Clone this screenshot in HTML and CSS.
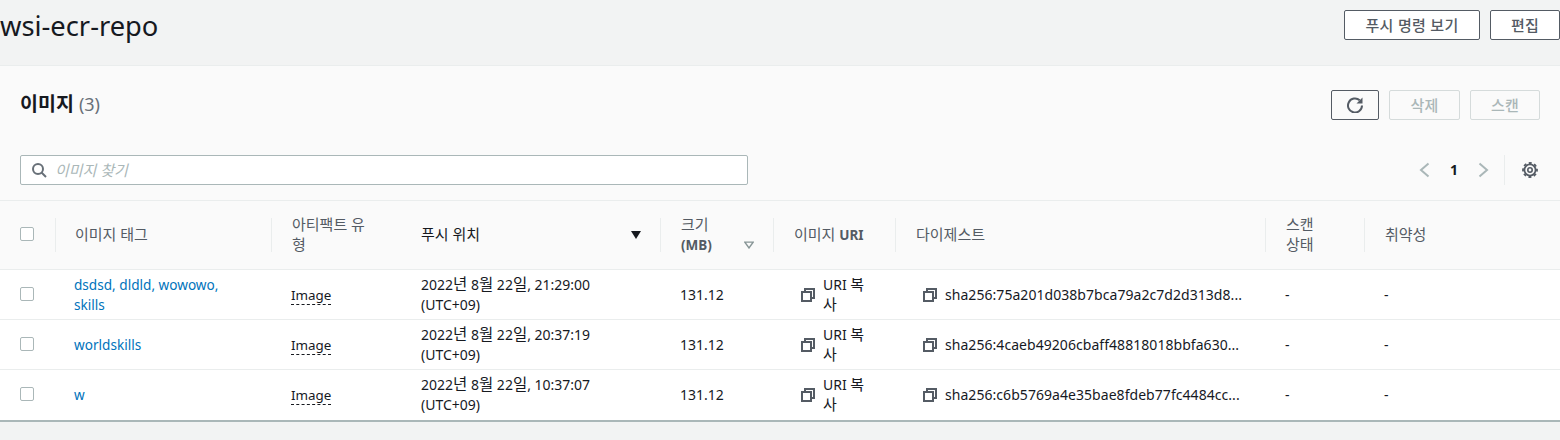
FILE: index.html
```html
<!DOCTYPE html>
<html lang="ko">
<head>
<meta charset="utf-8">
<title>wsi-ecr-repo</title>
<link rel="stylesheet" href="styles.css">
</head>
<body>
<header class="page-head">
  <h1 class="page-title">wsi-ecr-repo</h1>
  <div class="actions head-actions">
    <button class="btn btn-push">푸시 명령 보기</button>
    <button class="btn btn-edit">편집</button>
  </div>
</header>
<main class="panel">
  <div class="panel-top">
    <h2 class="panel-title">이미지 <span class="count">(3)</span></h2>
    <div class="actions panel-actions">
      <button class="btn btn-refresh" aria-label="새로 고침">
        <svg class="icon" viewBox="0 0 16 16" width="16" height="16"><path d="M15 8.500a7 7 0 1 1-2.300-5.200" fill="none" stroke="currentColor" stroke-width="2"/><path d="M15.500 .5v6h-6z" fill="currentColor"/></svg>
      </button>
      <button class="btn btn-off btn-delete" disabled>삭제</button>
      <button class="btn btn-off btn-scan" disabled>스캔</button>
    </div>
  </div>
  <div class="panel-tools">
    <div class="search">
      <svg class="icon search-icon" viewBox="0 0 16 16" width="16" height="16"><circle cx="7" cy="7" r="5" fill="none" stroke="currentColor" stroke-width="2"/><path d="M10.500 10.500l4.500 4.500" fill="none" stroke="currentColor" stroke-width="2"/></svg>
      <span class="placeholder">이미지 찾기</span>
    </div>
    <div class="pager">
      <svg class="chev" viewBox="0 0 16 16" width="16" height="16"><path d="M10.500 1.500L3 8l7.500 6.500" fill="none" stroke="currentColor" stroke-width="2"/></svg>
      <span class="page-num">1</span>
      <svg class="chev" viewBox="0 0 16 16" width="16" height="16"><path d="M5.500 1.500L13 8l-7.500 6.500" fill="none" stroke="currentColor" stroke-width="2"/></svg>
      <span class="pager-sep"></span>
      <svg class="gear" viewBox="0 0 16 16" width="16" height="16"><circle cx="8" cy="8" r="2.200" fill="none" stroke="currentColor" stroke-width="1.600"/><circle cx="8" cy="8" r="5.600" fill="none" stroke="currentColor" stroke-width="1.800"/><circle cx="8" cy="8" r="7" fill="none" stroke="currentColor" stroke-width="1.800" stroke-dasharray="3 2.500" stroke-dashoffset="1.500"/></svg>
    </div>
  </div>
  <table class="images">
    <colgroup>
      <col class="c-check"><col class="c-tag"><col class="c-type"><col class="c-push"><col class="c-size"><col class="c-uri"><col class="c-digest"><col class="c-scan"><col class="c-vuln">
    </colgroup>
    <thead>
      <tr>
        <th class="cell-check"><span class="check"></span></th>
        <th><div class="th-in first"><span>이미지 태그</span></div></th>
        <th><div class="th-in"><span>아티팩트 유<br>형</span></div></th>
        <th><div class="th-in sorted"><span>푸시 위치</span><svg class="sort" viewBox="0 0 10 8" width="10" height="8"><path d="M0 0h10L5 8z" fill="#16191f"/></svg></div></th>
        <th><div class="th-in sortable"><span class="size-label">크기<br><b>(MB)</b></span><svg class="sort sort-off" viewBox="0 0 12 9" width="10" height="8"><path d="M1 1h10L6 8z" fill="none" stroke="currentColor" stroke-width="1.700"/></svg></div></th>
        <th><div class="th-in"><span>이미지 <b>URI</b></span></div></th>
        <th><div class="th-in"><span>다이제스트</span></div></th>
        <th><div class="th-in"><span>스캔<br>상태</span></div></th>
        <th><div class="th-in"><span>취약성</span></div></th>
      </tr>
    </thead>
    <tbody>
      <tr>
        <td class="cell-check"><span class="check"></span></td>
        <td class="cell-tag"><a href="#">dsdsd</a>, <a href="#">dldld</a>, <a href="#">wowowo</a>,<br><a href="#">skills</a></td>
        <td class="cell-type"><span class="dashed">Image</span></td>
        <td class="cell-date">2022<span class="ko">년</span> 8<span class="ko">월</span> 22<span class="ko">일</span>, 21:29:00<br>(UTC+09)</td>
        <td class="cell-size">131.12</td>
        <td class="cell-uri"><div class="copy"><svg class="icon" viewBox="0 0 14 14" width="14" height="14"><path d="M4 4V1h9v9h-3M1 4h9v9H1z" fill="none" stroke="currentColor" stroke-width="2"/></svg><span class="copy-text">URI <span class="ko-sm">복</span><br><span class="ko-sm">사</span></span></div></td>
        <td class="cell-digest"><div class="copy"><svg class="icon" viewBox="0 0 14 14" width="14" height="14"><path d="M4 4V1h9v9h-3M1 4h9v9H1z" fill="none" stroke="currentColor" stroke-width="2"/></svg><span class="hash">sha256:75a201d038b7bca79a2c7d2d313d8...</span></div></td>
        <td class="cell-dash">-</td>
        <td class="cell-dash">-</td>
      </tr>
      <tr>
        <td class="cell-check"><span class="check"></span></td>
        <td class="cell-tag"><a href="#">worldskills</a></td>
        <td class="cell-type"><span class="dashed">Image</span></td>
        <td class="cell-date">2022<span class="ko">년</span> 8<span class="ko">월</span> 22<span class="ko">일</span>, 20:37:19<br>(UTC+09)</td>
        <td class="cell-size">131.12</td>
        <td class="cell-uri"><div class="copy"><svg class="icon" viewBox="0 0 14 14" width="14" height="14"><path d="M4 4V1h9v9h-3M1 4h9v9H1z" fill="none" stroke="currentColor" stroke-width="2"/></svg><span class="copy-text">URI <span class="ko-sm">복</span><br><span class="ko-sm">사</span></span></div></td>
        <td class="cell-digest"><div class="copy"><svg class="icon" viewBox="0 0 14 14" width="14" height="14"><path d="M4 4V1h9v9h-3M1 4h9v9H1z" fill="none" stroke="currentColor" stroke-width="2"/></svg><span class="hash">sha256:4caeb49206cbaff48818018bbfa630...</span></div></td>
        <td class="cell-dash">-</td>
        <td class="cell-dash">-</td>
      </tr>
      <tr>
        <td class="cell-check"><span class="check"></span></td>
        <td class="cell-tag"><a href="#">w</a></td>
        <td class="cell-type"><span class="dashed">Image</span></td>
        <td class="cell-date">2022<span class="ko">년</span> 8<span class="ko">월</span> 22<span class="ko">일</span>, 10:37:07<br>(UTC+09)</td>
        <td class="cell-size">131.12</td>
        <td class="cell-uri"><div class="copy"><svg class="icon" viewBox="0 0 14 14" width="14" height="14"><path d="M4 4V1h9v9h-3M1 4h9v9H1z" fill="none" stroke="currentColor" stroke-width="2"/></svg><span class="copy-text">URI <span class="ko-sm">복</span><br><span class="ko-sm">사</span></span></div></td>
        <td class="cell-digest"><div class="copy"><svg class="icon" viewBox="0 0 14 14" width="14" height="14"><path d="M4 4V1h9v9h-3M1 4h9v9H1z" fill="none" stroke="currentColor" stroke-width="2"/></svg><span class="hash">sha256:c6b5769a4e35bae8fdeb77fc4484cc...</span></div></td>
        <td class="cell-dash">-</td>
        <td class="cell-dash">-</td>
      </tr>
    </tbody>
  </table>
</main>
</body>
</html>
```
FILE: styles.css
```css
* { box-sizing: border-box; }
html, body { margin: 0; padding: 0; height: 100%; overflow: hidden; }
body {
  background: #f2f3f3;
  color: #16191f;
  font-family: "Noto Sans", "Noto Sans CJK KR", sans-serif;
  font-size: 14px;
  line-height: 20px;
}
.page-head {
  height: 66px;
  display: flex;
  justify-content: space-between;
  align-items: flex-start;
  padding: 10px 0 0 0;
  border-bottom: 1px solid #eaeded;
}
.page-title { margin: 0; font-size: 27.300px; font-weight: 400; line-height: 32px; }
.actions { display: flex; }
.head-actions { gap: 10px; }
.btn {
  height: 30px;
  padding: 0;
  border: 1px solid #545b64;
  border-radius: 2px;
  background: #fff;
  color: #545b64;
  font: inherit;
  font-size: 15px;
  font-weight: 500;
  letter-spacing: .3px;
  display: flex;
  align-items: center;
  justify-content: center;
}
.btn-push { width: 136px; }
.btn-edit { width: 70px; }
.btn-refresh { width: 48px; background: #fafafa; }
.btn-delete { width: 71px; }
.btn-scan { width: 70px; }
.btn-off { border-color: #d5dbdb; color: #aab7b8; background: #fafafa; }
.panel { background: #fafafa; border-bottom: 2px solid #aab7b8; }
.panel-top {
  height: 69px;
  padding: 24px 20px 0;
  display: flex;
  justify-content: space-between;
  align-items: flex-start;
}
.panel-title { margin: 0; font-size: 19.500px; line-height: 28px; font-weight: 700; }
.count { font-weight: 400; color: #687078; font-size: 18px; }
.panel-actions { gap: 10px; }
.panel-tools {
  height: 65px;
  padding: 20px 22px 0 20px;
  display: flex;
  justify-content: space-between;
  align-items: flex-start;
}
.search {
  width: 728px;
  height: 30px;
  border: 1px solid #aab7b8;
  border-radius: 2px;
  background: #fff;
  display: flex;
  align-items: center;
  padding-left: 10px;
  gap: 8px;
}
.search-icon { color: #687078; }
.placeholder { font-style: italic; color: #aab7b8; font-size: 15px; }
.pager { display: flex; align-items: center; height: 30px; color: #aab7b8; }
.chev { display: block; margin: 0; }
.page-num { width: 40px; text-align: center; color: #16191f; font-weight: 700; font-size: 14px; }
.pager-sep { width: 1px; height: 30px; background: #eaeded; margin: 0 17px 0 14px; }
.gear { color: #545b64; }
.images { width: 1560px; table-layout: fixed; border-collapse: collapse; }
.c-check { width: 55px; }
.c-tag { width: 216px; }
.c-type { width: 130px; }
.c-push { width: 259px; }
.c-size { width: 113px; }
.c-uri { width: 122px; }
.c-digest { width: 370px; }
.c-scan { width: 99px; }
.c-vuln { width: 196px; }
thead tr { height: 69px; }
thead { border-top: 1px solid #eaeded; border-bottom: 1px solid #eaeded; }
th {
  padding: 0;
  font-weight: 400;
  font-size: 15px;
  text-align: left;
  color: #545b64;
  background: #fafafa;
  vertical-align: middle;
}
.th-in {
  height: 34px;
  border-left: 1px solid #eaeded;
  padding: 0 20px;
  display: flex;
  flex-direction: column;
  justify-content: center;
  line-height: 20px;
}
.th-in > span { margin-bottom: 2px; }
.th-in.first { padding: 0 19px; }
.sorted { color: #16191f; flex-direction: row; justify-content: space-between; align-items: center; border-left: 0; padding-left: 20px; padding-right: 19px; }
.sortable { flex-direction: row; justify-content: space-between; align-items: center; padding-right: 19px; }
.sort-off { color: #879596; margin-bottom: 3px; align-self: flex-end; }
th b { font-weight: 700; font-size: 13.500px; }
.cell-check { padding-left: 20px; }
.check {
  display: block;
  width: 14px;
  height: 14px;
  margin-bottom: 2px;
  border: 1px solid #aab7b8;
  border-radius: 2px;
  background: #fff;
}
tbody tr { height: 50px; border-bottom: 1px solid #eaeded; }
tbody tr:last-child { border-bottom: 0; }
td { padding: 0; background: #fff; color: #16191f; vertical-align: middle; font-size: 14px; }
.ko { font-size: 15.500px; line-height: 1; }
.ko-sm { font-size: 15px; line-height: 1; }
.cell-tag { padding-left: 19px; color: #0073bb; font-size: 13.600px; }
.cell-tag a { color: #0073bb; text-decoration: none; }
.cell-type { padding-left: 20px; font-size: 13.400px; }
.dashed { border-bottom: 1px dashed #16191f; }
.cell-date { padding-left: 20px; }
.cell-size { padding-left: 20px; }
.cell-uri { padding-left: 28px; }
.cell-digest { padding-left: 28px; }
.copy { display: flex; align-items: center; gap: 8px; }
.copy .icon { color: #545b64; flex: none; }
.copy-text { display: block; }
.hash { white-space: nowrap; letter-spacing: .05px; }
.cell-dash { padding-left: 20px; }
```
